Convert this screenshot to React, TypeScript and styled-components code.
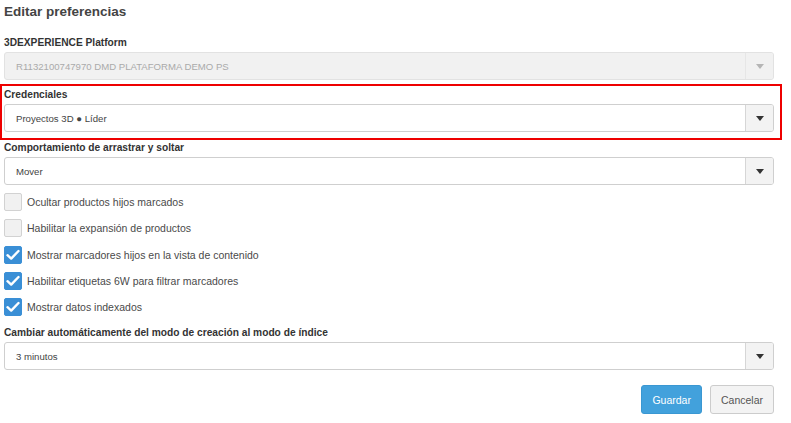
import React from "react";
import styled, { createGlobalStyle } from "styled-components";

const Global = createGlobalStyle`
  html, body { margin: 0; padding: 0; background: #ffffff; }
  body { font-family: "Liberation Sans", Arial, sans-serif; }
`;

const Page = styled.div`
  width: 770px;
  padding: 4px 0 0 4px;
  display: flex;
  flex-direction: column;
`;

const Title = styled.h1`
  margin: 0 0 17px 0;
  font-size: 13.5px;
  line-height: 16px;
  font-weight: bold;
  color: #444444;
`;

const Field = styled.div<{ $gap?: number }>`
  position: relative;
  display: flex;
  flex-direction: column;
  gap: 3px;
  margin-bottom: ${(p) => p.$gap ?? 9}px;
`;

const Label = styled.div`
  font-size: 10.2px;
  line-height: 12px;
  font-weight: bold;
  color: #333333;
`;

const SelectBox = styled.div<{ $disabled?: boolean }>`
  height: 26px;
  display: flex;
  align-items: stretch;
  border: 1px solid ${(p) => (p.$disabled ? "#e2e2e2" : "#cfcfcf")};
  border-radius: 3px;
  background: ${(p) => (p.$disabled ? "#f1f1f1" : "#ffffff")};
  overflow: hidden;
`;

const SelectValue = styled.div<{ $disabled?: boolean }>`
  flex: 1;
  display: flex;
  align-items: center;
  padding-left: 11px;
  font-size: 9.6px;
  color: ${(p) => (p.$disabled ? "#aaaaaa" : "#444444")};
`;

const ArrowCell = styled.div<{ $disabled?: boolean }>`
  width: 27px;
  display: flex;
  align-items: center;
  justify-content: center;
  border-left: 1px solid ${(p) => (p.$disabled ? "#e6e6e6" : "#d6d6d6")};
  background: ${(p) => (p.$disabled ? "#f1f1f1" : "#f3f3f3")};
`;

const Arrow = styled.span<{ $disabled?: boolean }>`
  width: 0;
  height: 0;
  border-left: 4px solid transparent;
  border-right: 4px solid transparent;
  border-top: 5px solid ${(p) => (p.$disabled ? "#b5b5b5" : "#333333")};
`;

const Highlight = styled.div`
  position: absolute;
  top: -5px;
  left: -4px;
  right: -8px;
  bottom: -8px;
  border: 2px solid #ee0000;
  pointer-events: none;
`;

const Checks = styled.div`
  display: flex;
  flex-direction: column;
  gap: 8.25px;
  margin-bottom: 11px;
`;

const CheckRow = styled.label`
  display: flex;
  align-items: center;
  gap: 5px;
  font-size: 10.5px;
  color: #4a4a4a;
  height: 18px;
`;

const Box = styled.span<{ $checked?: boolean }>`
  width: 18px;
  height: 18px;
  box-sizing: border-box;
  border-radius: 2px;
  display: flex;
  align-items: center;
  justify-content: center;
  background: ${(p) => (p.$checked ? "#3a8fd6" : "#f1f1f1")};
  border: 1px solid ${(p) => (p.$checked ? "#3a8fd6" : "#d2d2d2")};
`;

const Actions = styled.div`
  display: flex;
  justify-content: flex-end;
  gap: 8px;
  margin-top: 6px;
`;

const Button = styled.button<{ $primary?: boolean }>`
  height: 29px;
  padding: 0 10px;
  border-radius: 3px;
  font-family: "Liberation Sans", Arial, sans-serif;
  font-size: 10.5px;
  cursor: pointer;
  background: ${(p) => (p.$primary ? "#42a1dc" : "#f3f3f3")};
  color: ${(p) => (p.$primary ? "#ffffff" : "#555555")};
  border: 1px solid ${(p) => (p.$primary ? "#3a97d2" : "#cccccc")};
`;

const Check = () => (
  <svg width="14" height="12" viewBox="0 0 14 12">
    <path d="M1.5 6.2 L5.2 9.6 L12.5 2" fill="none" stroke="#ffffff" strokeWidth="2.4" strokeLinecap="round" strokeLinejoin="round" />
  </svg>
);

const Select = ({ value, disabled }: { value: string; disabled?: boolean }) => (
  <SelectBox $disabled={disabled}>
    <SelectValue $disabled={disabled}>{value}</SelectValue>
    <ArrowCell $disabled={disabled}>
      <Arrow $disabled={disabled} />
    </ArrowCell>
  </SelectBox>
);

const options: { text: string; checked: boolean }[] = [
  { text: "Ocultar productos hijos marcados", checked: false },
  { text: "Habilitar la expansión de productos", checked: false },
  { text: "Mostrar marcadores hijos en la vista de contenido", checked: true },
  { text: "Habilitar etiquetas 6W para filtrar marcadores", checked: true },
  { text: "Mostrar datos indexados", checked: true },
];

export default function App() {
  return (
    <>
      <Global />
      <Page>
        <Title>Editar preferencias</Title>
        <Field>
          <Label>3DEXPERIENCE Platform</Label>
          <Select value="R1132100747970 DMD PLATAFORMA DEMO PS" disabled />
        </Field>
        <Field $gap={10}>
          <Label>Credenciales</Label>
          <Select value="Proyectos 3D ● Líder" />
          <Highlight />
        </Field>
        <Field $gap={8}>
          <Label>Comportamiento de arrastrar y soltar</Label>
          <Select value="Mover" />
        </Field>
        <Checks>
          {options.map((o) => (
            <CheckRow key={o.text}>
              <Box $checked={o.checked}>{o.checked && <Check />}</Box>
              {o.text}
            </CheckRow>
          ))}
        </Checks>
        <Field $gap={9}>
          <Label>Cambiar automáticamente del modo de creación al modo de índice</Label>
          <Select value="3 minutos" />
        </Field>
        <Actions>
          <Button $primary>Guardar</Button>
          <Button>Cancelar</Button>
        </Actions>
      </Page>
    </>
  );
}
